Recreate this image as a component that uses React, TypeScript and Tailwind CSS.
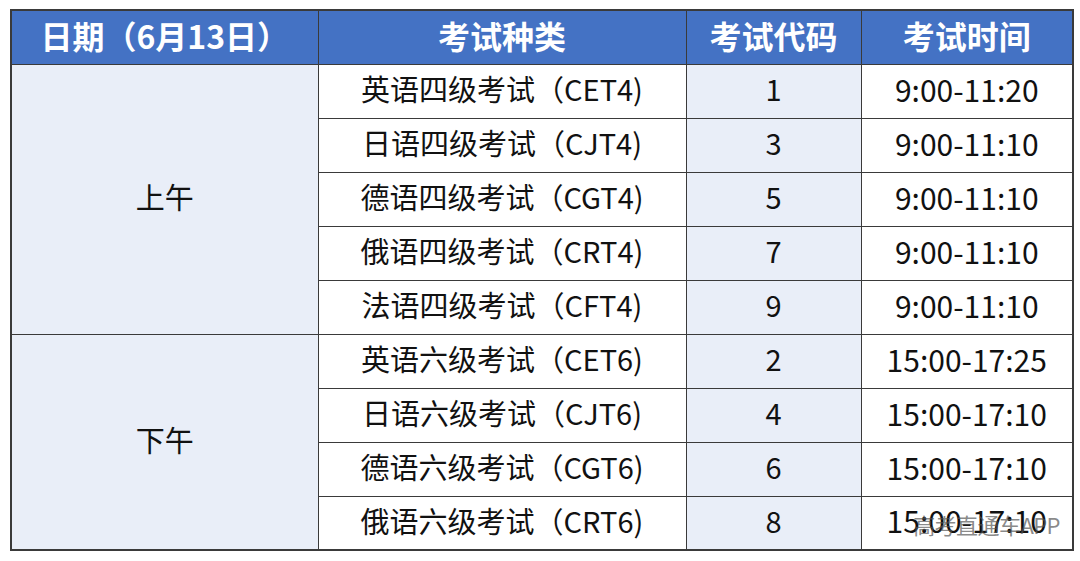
const rows = [
  { type: '英语四级考试（CET4)', code: '1', time: '9:00-11:20' },
  { type: '日语四级考试（CJT4)', code: '3', time: '9:00-11:10' },
  { type: '德语四级考试（CGT4)', code: '5', time: '9:00-11:10' },
  { type: '俄语四级考试（CRT4)', code: '7', time: '9:00-11:10' },
  { type: '法语四级考试（CFT4)', code: '9', time: '9:00-11:10' },
  { type: '英语六级考试（CET6)', code: '2', time: '15:00-17:25' },
  { type: '日语六级考试（CJT6)', code: '4', time: '15:00-17:10' },
  { type: '德语六级考试（CGT6)', code: '6', time: '15:00-17:10' },
  { type: '俄语六级考试（CRT6)', code: '8', time: '15:00-17:10' },
]

const cell = 'border border-[#3a3a3a] text-center align-middle px-0 pt-0 pb-[5px]'

export default function App() {
  return (
    <div
      className="w-[1080px] h-[561px] bg-white pt-[9px] pl-[10px]"
      style={{ fontFamily: '"Noto Sans CJK SC", "Noto Sans", sans-serif' }}
    >
      <div className="relative w-[1062px]">
        <table className="table-fixed border-collapse border-2 border-[#3a3a3a] w-[1062px]">
          <colgroup>
            <col className="w-[307px]" />
            <col className="w-[368px]" />
            <col className="w-[175px]" />
            <col className="w-[212px]" />
          </colgroup>
          <thead>
            <tr className="h-[54px] bg-[#4472c4] text-white text-[32px] font-bold leading-none">
              <th className={cell}>日期（6月13日）</th>
              <th className={cell}>考试种类</th>
              <th className={cell}>考试代码</th>
              <th className={cell}>考试时间</th>
            </tr>
          </thead>
          <tbody className="text-[29px] text-[#111] leading-none">
            {rows.map((r, i) => (
              <tr key={i} className="h-[54px]">
                {i === 0 && (
                  <td rowSpan={5} className={`${cell} bg-[#e9eef8]`}>
                    上午
                  </td>
                )}
                {i === 5 && (
                  <td rowSpan={4} className={`${cell} bg-[#e9eef8]`}>
                    下午
                  </td>
                )}
                <td className={cell}>{r.type}</td>
                <td className={`${cell} bg-[#e9eef8]`}>{r.code}</td>
                <td className={`${cell} text-[30px]`}>{r.time}</td>
              </tr>
            ))}
          </tbody>
        </table>
        <div className="absolute right-[12px] bottom-[16px] text-[22px] leading-none text-[#555]/70 tracking-tight">
          高考直通车APP
        </div>
      </div>
    </div>
  )
}
